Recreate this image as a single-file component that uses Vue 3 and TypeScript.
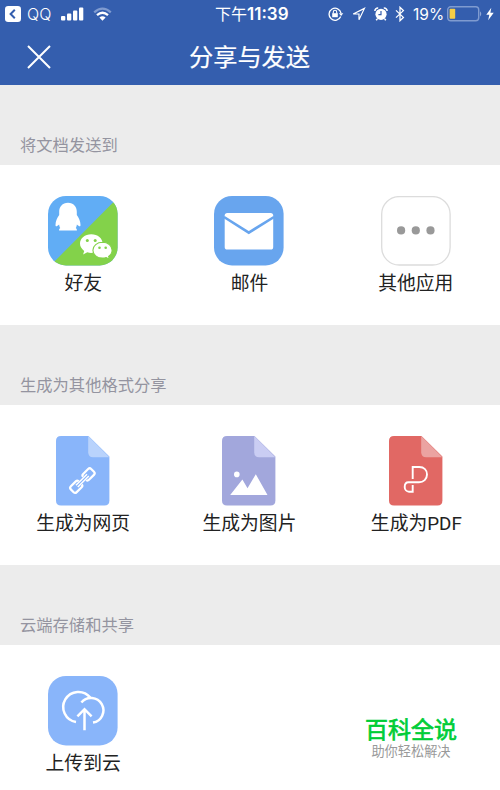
<script setup lang="ts">
interface Item {
  icon: string
  label: string
}
interface Section {
  title: string
  items: Item[]
}

const sections: Section[] = [
  {
    title: '将文档发送到',
    items: [
      { icon: 'friends', label: '好友' },
      { icon: 'mail', label: '邮件' },
      { icon: 'more', label: '其他应用' },
    ],
  },
  {
    title: '生成为其他格式分享',
    items: [
      { icon: 'web', label: '生成为网页' },
      { icon: 'image', label: '生成为图片' },
      { icon: 'pdf', label: '生成为PDF' },
    ],
  },
  {
    title: '云端存储和共享',
    items: [{ icon: 'cloud', label: '上传到云' }],
  },
]

const fileColors: Record<string, { body: string; fold: string }> = {
  web: { body: '#89b5fa', fold: '#b9d3fc' },
  image: { body: '#a2a7dc', fold: '#cacdf3' },
  pdf: { body: '#e16864', fold: '#eba3a1' },
}
</script>

<template>
  <div class="screen">
    <header class="header">
      <div class="status">
        <div class="status-left">
          <svg class="back" width="16" height="16" viewBox="0 0 16 16">
            <rect width="16" height="16" rx="3.2" fill="#fff" />
            <path d="M9.8 3.8 5.6 8l4.2 4.2" fill="none" stroke="#345eae" stroke-width="2" />
          </svg>
          <span class="carrier">QQ</span>
          <svg class="signal" width="23" height="14" viewBox="0 0 23 14" fill="#fff">
            <rect x="0" y="9" width="4.3" height="4.5" rx="1" />
            <rect x="6" y="6.5" width="4.3" height="7" rx="1" />
            <rect x="12" y="3.5" width="4.3" height="10" rx="1" />
            <rect x="18" y="0.5" width="4.3" height="13" rx="1" />
          </svg>
          <svg class="wifi" width="19" height="14" viewBox="0 0 19 14" fill="none" stroke-width="2.3">
            <path d="M1.2 5.3Q9.5-2 17.8 5.3" stroke="#7f9bd0" />
            <path d="M4 8.2Q9.5 3.3 15 8.2" stroke="#fff" />
            <path d="M6.4 10.6Q9.5 8 12.6 10.6L9.5 13.8Z" fill="#fff" />
          </svg>
        </div>
        <span class="time">下午<b>11:39</b></span>
        <div class="status-right">
          <svg class="lock" width="16" height="14" viewBox="0 0 16 14" fill="none" stroke="#fff" stroke-width="1.3">
            <path d="M12.7 9.4A6 6 0 1 1 13 6.2" />
            <path d="M10.9 6.2h4.4L13.1 9Z" fill="#fff" stroke="none" />
            <rect x="4.2" y="6.2" width="5.6" height="4" fill="#fff" stroke="none" />
            <path d="M5.3 6.5V5a1.7 1.7 0 0 1 3.4 0v1.5" stroke-width="1.1" />
          </svg>
          <svg class="arrow" width="14" height="14" viewBox="0 0 14 14">
            <path d="M1.2 7 12.4 1.4 7 12.8V7Z" fill="none" stroke="#fff" stroke-width="1.2" />
          </svg>
          <svg class="alarm" width="14" height="14" viewBox="0 0 14 14">
            <circle cx="7" cy="7.3" r="5.6" fill="#fff" />
            <path d="M.9 4A3 3 0 0 1 4.2 1M13.1 4A3 3 0 0 0 9.8 1M3.3 12l-1.1 1.3M10.7 12l1.1 1.3" fill="none" stroke="#fff" stroke-width="1.6" />
            <path d="M7 4v3.7H4.4" fill="none" stroke="#345eae" stroke-width="1.2" />
          </svg>
          <svg class="bluetooth" width="10" height="16" viewBox="0 0 10 16">
            <path d="M1 4.4 8.4 11.4 5 14.7V1.3L8.4 4.6 1 11.6" fill="none" stroke="#fff" stroke-width="1.3" />
          </svg>
          <span class="percent">19%</span>
          <svg class="battery" width="36" height="16" viewBox="0 0 36 16">
            <rect x=".7" y=".8" width="31" height="14" rx="3" fill="none" stroke="#7f9bd0" stroke-width="1.4" />
            <path d="M33.2 5.2q2 2.6 0 5.2Z" fill="#a6b8dd" />
            <rect x="2.6" y="2.8" width="5.6" height="10" rx=".8" fill="#f6ce45" />
          </svg>
          <svg class="bolt" width="8" height="14" viewBox="0 0 8 14">
            <path d="M5.3.8.3 7.8h3L2.2 13.2 7.7 5.8H4.4Z" fill="#fff" />
          </svg>
        </div>
      </div>
      <div class="navbar">
        <svg class="close" width="24" height="24" viewBox="0 0 24 24">
          <path d="M1 1 23 23M23 1 1 23" stroke="#fff" stroke-width="2" />
        </svg>
        <h1>分享与发送</h1>
      </div>
    </header>

    <section v-for="section in sections" :key="section.title">
      <h2>{{ section.title }}</h2>
      <div class="grid">
        <div v-for="item in section.items" :key="item.icon" class="item">
          <svg width="70" height="70" viewBox="0 0 70 70">
            <template v-if="item.icon === 'friends'">
              <clipPath id="tile"><rect width="69.6" height="69.4" rx="18" /></clipPath>
              <g clip-path="url(#tile)">
                <rect width="70" height="70" fill="#61adf5" />
                <path d="M72-.4V72H0Z" fill="#83d24a" />
              </g>
              <path d="M20 6.7c-5.6 0-8.8 4-8.8 9.2v3.2c-2.1 2.8-3.7 6.600-3.700 9.800 0 2 1.400 1.600 3.600-.5.2 1.600.6 2.700 1.200 3.600-.9.4-1.300 1.300-1.200 2.600h17.800c.1-1.300-.3-2.200-1.200-2.600.6-.9 1-2 1.200-3.600 2.200 2.100 3.600 2.500 3.600.5 0-3.200-1.600-7-3.700-9.800v-3.200c0-5.200-3.200-9.200-8.800-9.200Z" fill="#fff" />
              <path d="M43.3 38.3c-6.4 0-11.3 4.1-11.3 9.3 0 3 1.6 5.5 4.2 7.3l-1.1 3.5 4.2-2.1c1.3.4 2.6.6 4 .6 6.4 0 11.3-4.1 11.3-9.3s-4.9-9.3-11.3-9.3Z" fill="#fff" />
              <path d="M54.5 46.3c-5.4 0-9.6 3.5-9.6 7.9s4.2 7.9 9.6 7.9c1.3 0 2.6-.2 3.7-.6l3.3 1.8-.9-2.9c2.1-1.5 3.5-3.7 3.5-6.2 0-4.4-4.2-7.9-9.6-7.9Z" fill="#fff" stroke="#83d24a" stroke-width="1.1" />
              <g fill="#83d24a">
                <circle cx="39.3" cy="44.6" r="1.5" /><circle cx="47.2" cy="44.6" r="1.5" />
                <circle cx="51.5" cy="51.7" r="1.3" /><circle cx="57.7" cy="51.7" r="1.3" />
              </g>
            </template>

            <template v-else-if="item.icon === 'mail'">
              <rect width="69.6" height="69.4" rx="18" fill="#68a5ee" />
              <rect x="10.7" y="17" width="48.5" height="36.5" rx="2.6" fill="#fff" />
              <path d="M10 21 34.8 36.6 60 21" fill="none" stroke="#68a5ee" stroke-width="2.6" />
            </template>

            <template v-else-if="item.icon === 'more'">
              <rect x=".7" y=".6" width="68.4" height="68.4" rx="17.5" fill="#fff" stroke="#dcdcdc" stroke-width="1.3" />
              <g fill="#999">
                <circle cx="20.1" cy="34.4" r="4.1" /><circle cx="34.8" cy="34.4" r="4.1" /><circle cx="49.5" cy="34.4" r="4.1" />
              </g>
            </template>

            <template v-else-if="item.icon === 'cloud'">
              <rect width="69.6" height="69.4" rx="18" fill="#89b5fa" />
              <g fill="none" stroke="#fff" stroke-width="2.5">
                <path d="M28 46.1A15.2 15.2 0 1 1 42.3 21.6" />
                <path d="M33.4 26.5A12.4 12.4 0 1 1 45 46.6" />
                <path d="M36.5 54.3V33M29.4 40.3 36.5 33.2 43.6 40.3" />
              </g>
            </template>

            <template v-else>
              <path d="M13 0H40.5L61.4 20.6V64.4q0 5-5 5H13q-5 0-5-5V5q0-5 5-5Z" :fill="fileColors[item.icon].body" />
              <path d="M40.2 0 61.4 21.2H45.2q-5 0-5-5Z" :fill="fileColors[item.icon].fold" />
              <g v-if="item.icon === 'web'" transform="translate(34.4 44.6) rotate(-45)" fill="none" stroke="#fff" stroke-width="2.2">
                <path d="M-3.2-2.1Q-3.2-4.1-5.2-4.1H-12.2Q-14.4-4.1-14.4-2V2Q-14.4 4.1-12.2 4.1H-5.2Q-3.2 4.1-3.2 2.3" />
                <path d="M3.2-2.3Q3.2-4.1 5.2-4.1H12.2Q14.4-4.1 14.4-2V2Q14.4 4.1 12.2 4.1H5.2Q3.2 4.1 3.2 2.3" />
                <path d="M-7.8-1.3H7.8M-7.8 1.3H7.8" stroke-width="1.5" />
              </g>
              <g v-else-if="item.icon === 'image'" fill="#fff">
                <circle cx="22.8" cy="38.4" r="2.8" />
                <path d="M16.2 59 28.4 43.5 33.5 52.3 41.8 38.3 53.5 59Z" />
              </g>
              <g v-else fill="none" stroke="#fff" stroke-width="1.9">
                <path d="M31.7 43V31H38.3C43 31 46 34 46 38.5S42.5 46.3 38 46.3H27.5C24.6 46.3 23.7 48.6 23.7 51S25.4 55.7 28 55.7H31.7V49" />
              </g>
            </template>
          </svg>
          <span class="label" :class="{ latin: item.icon === 'pdf' }">{{ item.label }}</span>
        </div>
      </div>
    </section>

    <div class="watermark">
      <strong>百科全说</strong>
      <span>助你轻松解决</span>
    </div>
  </div>
</template>

<style>
body {
  margin: 0;
  overflow: hidden;
}
</style>

<style scoped>
.screen {
  position: relative;
  width: 500px;
  height: 790px;
  overflow: hidden;
  background: #fff;
  font-family: 'Liberation Sans', 'Noto Sans CJK SC', sans-serif;
  color: #222;
}
.header {
  height: 85px;
  background: #345eae;
  color: #fff;
}
.status {
  display: grid;
  grid-template-columns: 215px 1fr auto;
  height: 28px;
  align-items: center;
  font-family: Inter, 'Noto Sans CJK SC', sans-serif;
  font-size: 16px;
  line-height: 28px;
}
.status-left,
.status-right {
  display: flex;
  align-items: center;
  height: 28px;
}
.back {
  margin-left: 5px;
}
.carrier {
  margin-left: 6px;
  width: 28px;
  font-size: 16px;
  font-weight: 300;
}
.signal {
  margin-left: 6px;
}
.wifi {
  margin-left: 9px;
}
.time {
  white-space: nowrap;
  font-size: 16px;
}
.time b {
  font-weight: 600;
  font-size: 17px;
}
.status-right {
  padding-right: 6px;
}
.arrow {
  margin-left: 8px;
}
.alarm {
  margin-left: 8px;
}
.bluetooth {
  margin-left: 7px;
}
.percent {
  margin-left: 8px;
  width: 32px;
  padding-top: 1px;
  font-size: 15.5px;
}
.battery {
  margin-left: 2px;
}
.bolt {
  margin-left: 3px;
}
.navbar {
  display: grid;
  grid-template-columns: 51px 1fr 52px;
  height: 56px;
  align-items: center;
}
.close {
  justify-self: end;
}
h1 {
  margin: 0;
  padding-top: 2px;
  font-size: 24.2px;
  font-weight: 400;
  -webkit-text-stroke: 0.2px currentColor;
  line-height: 56px;
  text-align: center;
}
h2 {
  box-sizing: border-box;
  height: 80px;
  margin: 0;
  padding: 40px 20px 0;
  background: #ececec;
  color: #9494a0;
  font-size: 16.3px;
  font-weight: 400;
  line-height: 40px;
}
.grid {
  box-sizing: border-box;
  display: grid;
  grid-template-columns: repeat(3, 1fr);
  height: 160px;
  padding: 31px 1px 0 0;
}
.item {
  display: flex;
  flex-direction: column;
  align-items: center;
}
.label {
  margin-top: 4px;
  font-size: 18.8px;
  line-height: 28px;
  white-space: nowrap;
}
.label.latin {
  padding-left: 1px;
  font-family: Roboto, 'Noto Sans CJK SC', sans-serif;
}
.watermark {
  position: absolute;
  left: 361px;
  top: 716px;
  width: 100px;
  display: flex;
  flex-direction: column;
  align-items: center;
  white-space: nowrap;
}
.watermark strong {
  color: #00cd37;
  font-size: 23px;
  font-weight: 400;
  -webkit-text-stroke: 0.7px currentColor;
  line-height: 29px;
}
.watermark span {
  color: #999;
  font-size: 13.2px;
  line-height: 14px;
}
</style>
